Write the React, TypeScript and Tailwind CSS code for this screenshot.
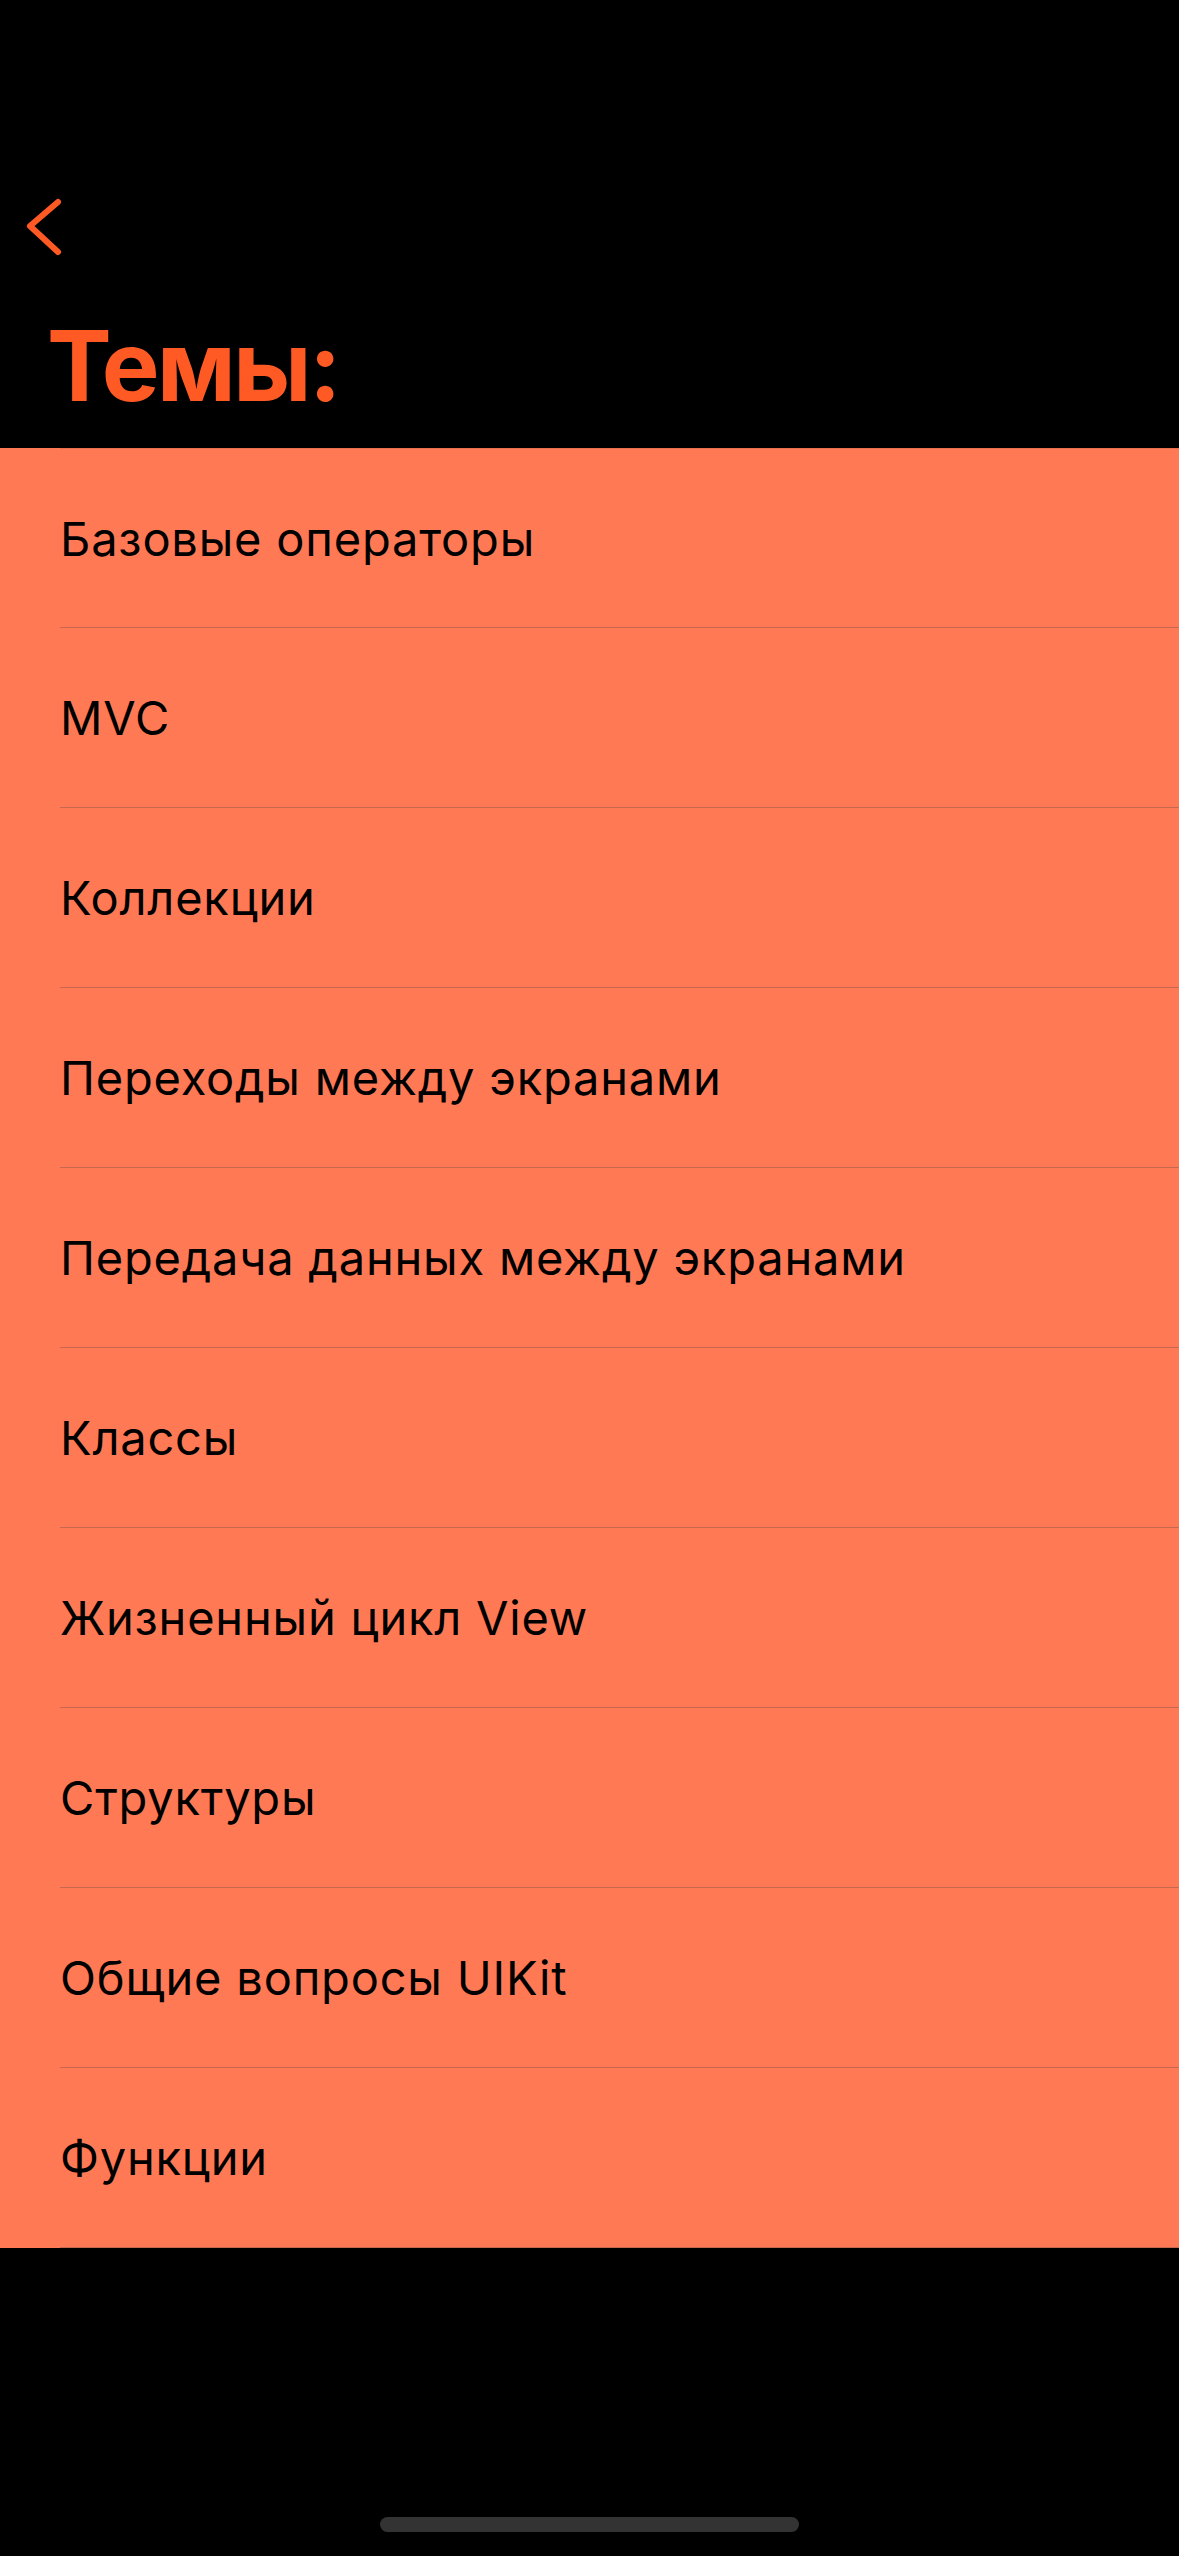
import React from "react";

const topics = [
  "Базовые операторы",
  "MVC",
  "Коллекции",
  "Переходы между экранами",
  "Передача данных между экранами",
  "Классы",
  "Жизненный цикл View",
  "Структуры",
  "Общие вопросы UIKit",
  "Функции",
];

export default function App() {
  return (
    <div
      className="w-[1179px] h-[2556px] bg-black flex flex-col overflow-hidden"
      style={{ fontFamily: "Inter, 'Noto Sans', sans-serif" }}
    >
      <div className="h-[448px] shrink-0 flex flex-col">
        <svg
          className="block ml-[24px] mt-[196px]"
          width="40"
          height="60"
          viewBox="0 0 40 60"
          fill="none"
        >
          <polyline
            points="34,6 6,30 34,56"
            stroke="#FF5A24"
            strokeWidth="6"
            strokeLinecap="round"
            strokeLinejoin="round"
          />
        </svg>
        <div className="ml-[47px] mt-[61px] text-[97px] leading-[97px] font-bold text-[#FF5A24] tracking-[-2.5px]">
          Темы:
        </div>
      </div>
      <div className="bg-[#FF7955] pl-[60px] shrink-0">
        {topics.map((t, i) => (
          <div
            key={t}
            className={
              "h-[180px] flex items-center border-b border-[#C4684F] " +
              (i === 0 ? "border-t border-t-[#E87050]" : "")
            }
          >
            <span className="text-[47px] leading-none text-black tracking-[0.8px]">{t}</span>
          </div>
        ))}
      </div>
      <div className="flex-1 flex items-end justify-center pb-[24px]">
        <div className="w-[419px] h-[15px] rounded-full bg-[#333333]" />
      </div>
    </div>
  );
}
